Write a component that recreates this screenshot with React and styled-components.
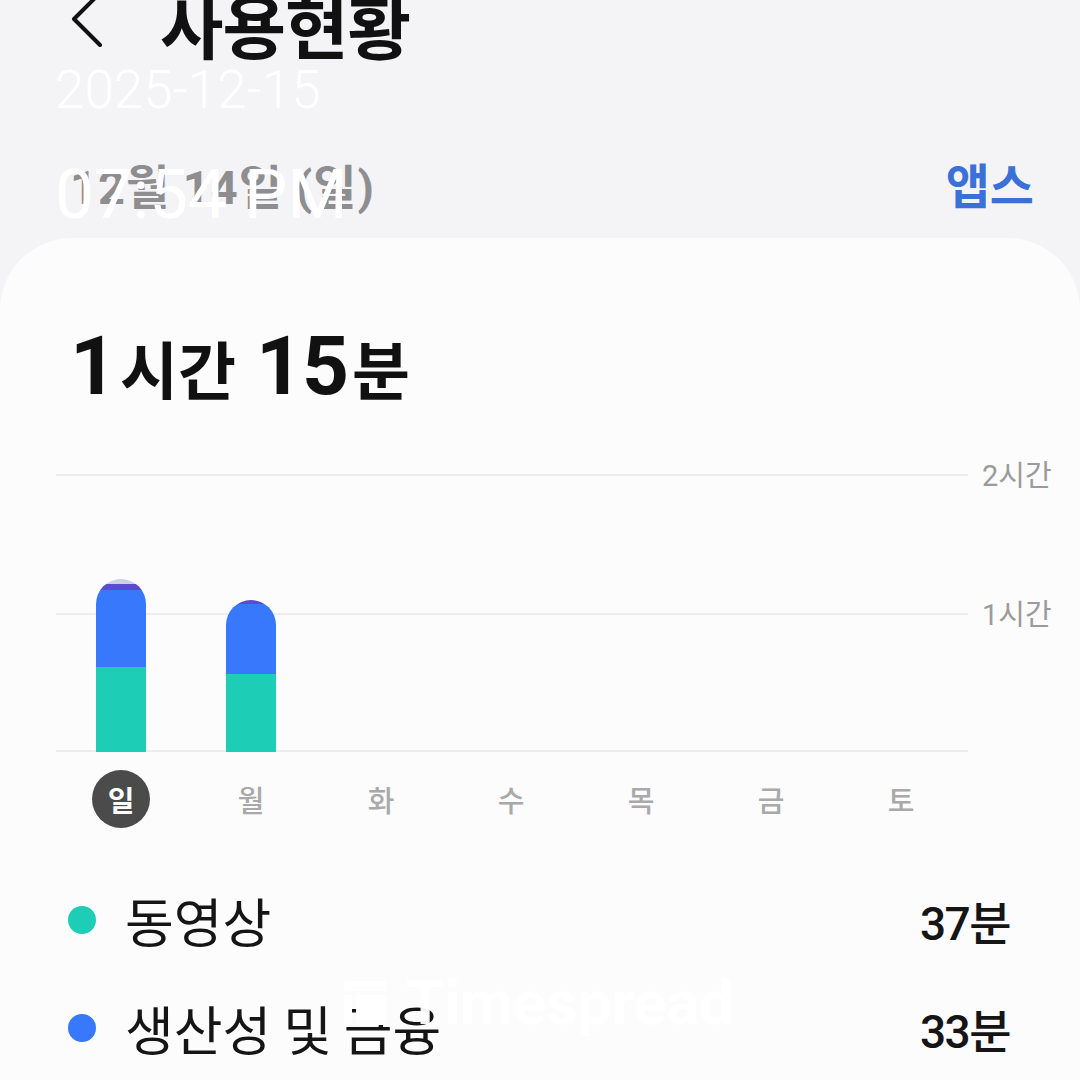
import React from 'react';
import styled, { createGlobalStyle } from 'styled-components';

const GlobalStyle = createGlobalStyle`
  html, body {
    margin: 0;
    padding: 0;
    background: #f4f4f6;
  }
  * {
    box-sizing: border-box;
  }
`;

const Colors = {
  video: '#1ecdb6',
  work: '#3778fc',
  other: '#5b4bd1',
  rest: '#c9d3e6',
};

const PX_PER_MIN = 277 / 120;

const days = [
  { label: '일', selected: true, parts: [37, 33, 3, 2] },
  { label: '월', parts: [34, 30, 2, 0] },
  { label: '화', parts: [] },
  { label: '수', parts: [] },
  { label: '목', parts: [] },
  { label: '금', parts: [] },
  { label: '토', parts: [] },
];

const partColors = [Colors.video, Colors.work, Colors.other, Colors.rest];

const legend = [
  { name: '동영상', time: '37분', color: Colors.video },
  { name: '생산성 및 금융', time: '33분', color: Colors.work },
];

const Screen = styled.div`
  position: relative;
  width: 1080px;
  height: 1080px;
  overflow: hidden;
  background: #f4f4f6;
  font-family: Roboto, 'Noto Sans CJK KR', sans-serif;
  color: #111;
`;

const TopBar = styled.header`
  display: flex;
  align-items: center;
  gap: 54px;
  height: 80px;
  margin-top: -16px;
  padding-left: 68px;
`;

const BackIcon = styled.svg`
  width: 38px;
  height: 56px;
  flex: none;
  margin-top: -10px;
`;

const Title = styled.h1`
  margin: 0;
  font-family: 'Noto Sans CJK KR', sans-serif;
  font-size: 69px;
  font-weight: 700;
  line-height: 80px;
  letter-spacing: -1px;
`;

const DateRow = styled.div`
  display: flex;
  align-items: center;
  justify-content: space-between;
  height: 60px;
  margin-top: 89px;
  padding: 0 46px 0 70px;
`;

const DateLabel = styled.span`
  font-size: 47px;
  font-weight: 700;
  color: #8e8e90;
  letter-spacing: 1px;
`;

const ModeToggle = styled.span`
  font-family: 'Noto Sans CJK KR', sans-serif;
  font-size: 48px;
  font-weight: 700;
  color: #3b70d8;
`;

const Card = styled.section`
  margin-top: 25px;
  height: 900px;
  background: #fcfcfc;
  border-radius: 72px 72px 0 0;
  padding-top: 88px;
`;

const Total = styled.div`
  display: flex;
  align-items: baseline;
  height: 80px;
  padding-left: 70px;
  font-weight: 700;
  line-height: 80px;
`;

const Num = styled.span`
  font-size: 82px;
  letter-spacing: -1px;
`;

const Unit = styled.span`
  font-family: 'Noto Sans CJK KR', sans-serif;
  font-size: 63px;
  margin: 0 ${(p) => (p.$gap ? '20px' : '0')} 0 4px;
`;

const Chart = styled.div`
  display: grid;
  grid-template-columns: 912px 1fr;
  margin-top: 68px;
  padding-left: 56px;
`;

const Plot = styled.div`
  display: grid;
  grid-template-columns: repeat(7, 1fr);
  align-items: end;
  height: 278px;
  background:
    linear-gradient(#ededed, #ededed) top / 100% 2px no-repeat,
    linear-gradient(#ededed, #ededed) 0 139px / 100% 2px no-repeat,
    linear-gradient(#ededed, #ededed) bottom / 100% 2px no-repeat;
`;

const BarSlot = styled.div`
  display: flex;
  justify-content: center;
`;

const Bar = styled.div`
  display: flex;
  flex-direction: column-reverse;
  width: 50px;
  border-radius: 25px 25px 0 0;
  overflow: hidden;
`;

const Segment = styled.div`
  flex: none;
  background: ${(p) => p.$color};
`;

const Axis = styled.div`
  display: grid;
  grid-template-rows: 139px 139px;
  padding-left: 14px;
`;

const AxisLabel = styled.span`
  font-family: Roboto, 'Noto Sans CJK KR', sans-serif;
  font-size: 29px;
  color: #9b9b9b;
  line-height: 34px;
  transform: translateY(-15px);
`;

const DayRow = styled.div`
  display: grid;
  grid-template-columns: repeat(7, 130px);
  margin-top: 18px;
  padding-left: 56px;
`;

const Day = styled.div`
  display: flex;
  align-items: center;
  justify-content: center;
  height: 58px;
`;

const DayText = styled.span`
  display: flex;
  align-items: center;
  justify-content: center;
  width: 58px;
  height: 58px;
  border-radius: 50%;
  font-family: 'Noto Sans CJK KR', sans-serif;
  font-size: 29px;
  font-weight: ${(p) => (p.$selected ? 700 : 500)};
  color: ${(p) => (p.$selected ? '#fff' : '#a9a9a9')};
  background: ${(p) => (p.$selected ? '#4b4b4b' : 'transparent')};
`;

const Legend = styled.ul`
  list-style: none;
  margin: 52px 0 0;
  padding: 0 70px 0 68px;
  display: flex;
  flex-direction: column;
  gap: 28px;
`;

const LegendRow = styled.li`
  display: flex;
  align-items: center;
  height: 80px;
`;

const Dot = styled.span`
  width: 28px;
  height: 28px;
  border-radius: 50%;
  background: ${(p) => p.$color};
  flex: none;
`;

const LegendName = styled.span`
  flex: 1;
  margin-left: 29px;
  font-family: 'Noto Sans CJK KR', sans-serif;
  font-size: 53px;
  font-weight: 400;
  color: #151515;
`;

const LegendTime = styled.span`
  font-size: 46px;
  font-weight: 500;
  letter-spacing: -1.5px;
  color: #151515;
`;

const Stamp = styled.div`
  position: absolute;
  left: 55px;
  top: 60px;
  display: flex;
  flex-direction: column;
  gap: 40px;
  color: #fff;
  font-family: Roboto, sans-serif;
  pointer-events: none;
`;

const StampDate = styled.span`
  font-size: 53px;
  font-weight: 300;
  line-height: 60px;
`;

const StampTime = styled.span`
  font-size: 69px;
  font-weight: 400;
  line-height: 70px;
`;

const Brand = styled.div`
  position: absolute;
  left: 342px;
  top: 966px;
  display: flex;
  align-items: center;
  gap: 18px;
  color: rgba(255, 255, 255, 0.95);
  font-family: Roboto, sans-serif;
  font-size: 62px;
  font-weight: 700;
  letter-spacing: -0.5px;
  pointer-events: none;
`;

const BrandIcon = styled.svg`
  width: 46px;
  height: 44px;
`;

const App = () => (
  <>
    <GlobalStyle />
    <Screen>
      <TopBar>
        <BackIcon viewBox="0 0 38 56">
          <path
            d="M32 2 L6 28 L32 54"
            fill="none"
            stroke="#111"
            strokeWidth="4"
            strokeLinecap="round"
            strokeLinejoin="round"
          />
        </BackIcon>
        <Title>사용현황</Title>
      </TopBar>

      <DateRow>
        <DateLabel>12월 14일 (일)</DateLabel>
        <ModeToggle>앱스</ModeToggle>
      </DateRow>

      <Card>
        <Total>
          <Num>1</Num>
          <Unit $gap>시간</Unit>
          <Num>15</Num>
          <Unit>분</Unit>
        </Total>

        <Chart>
          <Plot>
            {days.map((d) => {
              const total = d.parts.reduce((a, b) => a + b, 0);
              return (
                <BarSlot key={d.label}>
                  {total > 0 && (
                    <Bar style={{ height: total * PX_PER_MIN }}>
                      {d.parts.map((m, i) =>
                        m > 0 ? (
                          <Segment
                            key={i}
                            $color={partColors[i]}
                            style={{ height: m * PX_PER_MIN }}
                          />
                        ) : null
                      )}
                    </Bar>
                  )}
                </BarSlot>
              );
            })}
          </Plot>
          <Axis>
            <AxisLabel>2시간</AxisLabel>
            <AxisLabel>1시간</AxisLabel>
          </Axis>
        </Chart>

        <DayRow>
          {days.map((d) => (
            <Day key={d.label}>
              <DayText $selected={d.selected}>{d.label}</DayText>
            </Day>
          ))}
        </DayRow>

        <Legend>
          {legend.map((l) => (
            <LegendRow key={l.name}>
              <Dot $color={l.color} />
              <LegendName>{l.name}</LegendName>
              <LegendTime>{l.time}</LegendTime>
            </LegendRow>
          ))}
        </Legend>
      </Card>

      <Stamp>
        <StampDate>2025-12-15</StampDate>
        <StampTime>07:54 PM</StampTime>
      </Stamp>

      <Brand>
        <BrandIcon viewBox="0 0 46 44">
          <rect x="2" y="0" width="42" height="10" rx="2" fill="#fff" />
          <rect x="2" y="14" width="8" height="30" fill="#fff" />
          <rect x="14" y="14" width="30" height="30" rx="2" fill="#fff" />
        </BrandIcon>
        <span>Timespread</span>
      </Brand>
    </Screen>
  </>
);

export default App;
